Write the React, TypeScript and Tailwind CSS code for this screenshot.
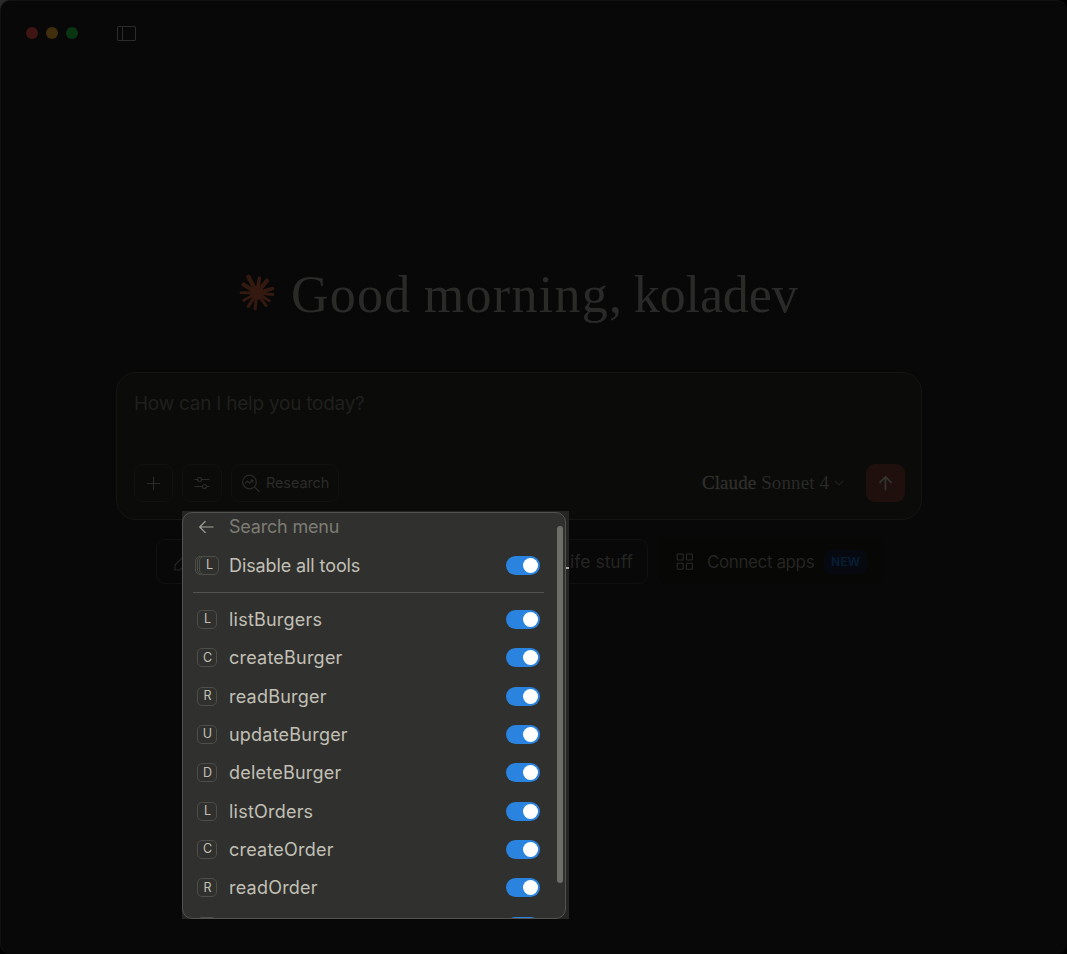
import React from "react";

const tools: [string, string][] = [
  ["L", "listBurgers"],
  ["C", "createBurger"],
  ["R", "readBurger"],
  ["U", "updateBurger"],
  ["D", "deleteBurger"],
  ["L", "listOrders"],
  ["C", "createOrder"],
  ["R", "readOrder"],
  ["", ""],
];

function Toggle() {
  return (
    <span className="flex h-[19px] w-[34px] shrink-0 items-center justify-end rounded-full bg-[#2a84df] pr-[2.5px]">
      <span className="h-[15px] w-[15px] rounded-full bg-white" />
    </span>
  );
}

function Key({ letter }: { letter: string }) {
  return (
    <span className="flex h-[19px] w-5 shrink-0 items-center justify-center rounded-[5px] border border-[#4d4d4a] bg-[#30302e] pl-px text-[12.5px] leading-none text-[#c2c0b6]">
      {letter}
    </span>
  );
}

function Burst() {
  const rays = [
    [-28, 20.5, 4.4], [9, 17, 3.6], [39, 18, 4.2], [74, 18, 3.4], [95, 17.5, 3],
    [122, 16, 3], [144, 17, 3], [187, 17.5, 3.2], [213, 17.5, 3.2],
    [241, 16.5, 3], [271, 17.5, 2.8], [302, 18, 4.2],
  ];
  return (
    <svg className="mb-[2px] h-[38px] w-[38px] shrink-0" viewBox="-19 -19 38 38" stroke="#33190f" strokeLinecap="round">
      {rays.map(([angle, length, width]) => (
        <line key={angle} x1="0" y1="0" x2="0" y2={-(length - width / 2)} strokeWidth={width} transform={`rotate(${angle})`} />
      ))}
      <circle r="7" fill="#33190f" stroke="none" />
    </svg>
  );
}

function ToolMenu() {
  return (
    <div className="absolute left-[182px] top-[511px] h-[408px] w-[387px] bg-[#252524] pt-px">
      <div className="relative h-[407px] w-[384px] overflow-hidden rounded-[10px] border border-[#52524f] bg-[#30302e] text-[#c2c0b6]">
        <div className="flex h-[33px] items-center pb-[5px] pl-[15px]">
          <svg className="h-4 w-[17px]" viewBox="0 0 17 16" fill="none" stroke="#a6a49b" strokeWidth="1.2">
            <path d="M15.5 8H2M7.5 2.2 1.7 8l5.8 5.8" />
          </svg>
          <span className="ml-[14px] text-[18px] leading-6 tracking-[-0.2px] text-[#7d7c75]">Search menu</span>
        </div>
        <div className="flex h-[38px] items-center pl-3 pr-[25px]">
          <span className="flex w-6 shrink-0">
            <span className="h-[19px] w-5 rounded-[5px] border border-[#4d4d4a]" />
            <span className="-ml-[18px] h-[19px] w-5 rounded-[5px] border border-[#4d4d4a] bg-[#30302e]" />
            <span className="-ml-[17px]"><Key letter="L" /></span>
          </span>
          <span className="ml-[10px] flex-1 whitespace-nowrap pt-px text-[18px] leading-6 tracking-[-0.1px]">Disable all tools</span>
          <Toggle />
        </div>
        <div className="ml-[10px] mt-2 h-px w-[351px] bg-[#52524f]" />
        <div className="mt-[7.3px]">
          {tools.map(([letter, name], i) => (
            <div key={i} className="flex h-[38.35px] items-center pl-[14px] pr-[25px]">
              <Key letter={letter} />
              <span className="ml-3 flex-1 pt-[0.8px] text-[18px] leading-6 tracking-[0.22px]">{name}</span>
              <Toggle />
            </div>
          ))}
        </div>
        <div className="absolute right-[2px] top-[13px] h-[357px] w-[6px] rounded-full bg-[#6e6e68]" />
      </div>
      <span className="absolute right-0 top-[56px] h-[2px] w-[3px] bg-[#a9a89f]" />
    </div>
  );
}

export default function App() {
  return (
    <div className="h-[954px] w-[1067px] overflow-hidden bg-linear-to-br from-[#2a2d2c] to-black to-50% font-['Inter','Noto_Sans',sans-serif]">
      <main className="relative flex h-full flex-col rounded-[10px] border-l border-t border-[#111212] bg-[#080808]">
        <header className="flex h-16 shrink-0 items-center pl-[25px]">
          <div className="flex gap-2">
            <span className="h-3 w-3 rounded-full bg-[#401614]" />
            <span className="h-3 w-3 rounded-full bg-[#402e0d]" />
            <span className="h-3 w-3 rounded-full bg-[#0a3513]" />
          </div>
          <svg className="ml-[38px] h-4 w-5" viewBox="0 0 20 16" fill="none" stroke="#2b2b2a" strokeWidth="1.1">
            <rect x="1.5" y="1.5" width="18" height="14" rx="1.2" />
            <path d="M6.5 1.5v14" />
          </svg>
        </header>

        <div className="mt-[195px] flex h-[68px] shrink-0 items-center pl-[237px]">
          <Burst />
          <h1 className="ml-[15px] whitespace-nowrap pt-px font-['Liberation_Serif',serif] text-[52px] leading-[68px] text-[#2a2a28]">
            <span className="tracking-[1.25px]">Good </span>
            <span className="-ml-[2px] tracking-[1.3px]">morning, </span>
            <span className="-ml-1 tracking-[-0.1px]">koladev</span>
          </h1>
        </div>

        <section className="ml-[115px] mt-[44px] flex h-[148px] w-[806px] shrink-0 flex-col justify-between rounded-[20px] border border-[#151511] bg-[#0b0b09] pb-[17px] pl-[17px] pr-4 pt-[19px]">
          <p className="text-[19px] leading-6 tracking-[-0.25px] text-[#20201e]">How can I help you today?</p>
          <div className="flex h-[38px] items-center text-[#2b2b29]">
            <span className="flex h-full w-[39px] items-center justify-center rounded-[9px] border border-[#11110f]">
              <svg className="h-[15px] w-[15px]" viewBox="0 0 15 15" stroke="currentColor" strokeWidth="1.1">
                <path d="M7.5 .8v13.4M.8 7.5h13.4" />
              </svg>
            </span>
            <span className="ml-[9px] flex h-full w-10 items-center justify-center rounded-[9px] border border-[#11110f]">
              <svg className="h-[14px] w-4" viewBox="0 0 16 14" fill="none" stroke="currentColor" strokeWidth="1.1">
                <path d="M.5 3.5h3M7.5 3.5h8M.5 10.5h8M12.5 10.5h3" />
                <circle cx="5.5" cy="3.5" r="2" />
                <circle cx="10.5" cy="10.5" r="2" />
              </svg>
            </span>
            <span className="ml-[9px] flex h-full w-[108px] items-center rounded-[9px] border border-[#11110f] pl-[9px]">
              <svg className="h-[19px] w-[19px]" viewBox="0 0 19 19" fill="none" stroke="currentColor" strokeWidth="1.2">
                <circle cx="8.5" cy="8" r="6.8" />
                <path d="m13.5 13 5 5M4.3 9.5l2.3-2.3 2 2 3-3M9.3 6h2.5v2.5" />
              </svg>
              <span className="ml-[6px] text-[14.5px] tracking-[-0.1px]">Research</span>
            </span>
            <span className="ml-auto whitespace-nowrap font-['Liberation_Serif',serif] text-[19px] tracking-[0.1px] text-[#2a2a28]">
              <span className="text-[#30302e] [-webkit-text-stroke:0.3px]">Claude</span> Sonnet 4
            </span>
            <svg className="ml-[5px] h-[6px] w-[10px]" viewBox="0 0 10 6" fill="none" stroke="#1f1f1d" strokeWidth="1.1">
              <path d="m.7.7 4.3 4.2L9.3.7" />
            </svg>
            <span className="ml-[22px] flex h-[38px] w-[39px] items-center justify-center rounded-[9px] bg-[#1f100d]">
              <svg className="h-4 w-4" viewBox="0 0 16 16" fill="none" stroke="#343330" strokeWidth="1.7">
                <path d="M7.5 15.2V1.8M1.5 7.8l6-6 6 6" />
              </svg>
            </span>
          </div>
        </section>

        <div className="ml-[155px] mt-[19px] flex h-[45px] shrink-0 text-[17.5px] text-[#252523]">
          <div className="flex w-[110px] items-center rounded-[9px] border border-[#111110] pl-4">
            <svg className="h-5 w-5" viewBox="0 0 20 20" fill="none" stroke="#252523" strokeWidth="1.2">
              <path d="M2 18v-5L13.5 1.5l5 5L7 18Z" />
            </svg>
          </div>
          <div className="ml-[252px] flex w-[130px] items-center justify-end whitespace-nowrap rounded-[9px] border border-[#111110] pr-[14px] pt-[2px]">
            Life stuff
          </div>
          <div className="ml-[10px] flex w-[225px] items-center whitespace-nowrap rounded-[9px] bg-[#070705] pl-[18px]">
            <svg className="h-[17px] w-[17px]" viewBox="0 0 17 17" fill="none" stroke="#2a2a28" strokeWidth="1.1">
              <rect x="1.2" y="1" width="6" height="6" rx=".7" />
              <rect x="10.4" y="1" width="6" height="6" rx=".7" />
              <rect x="1.2" y="10.2" width="6" height="6" rx=".7" />
              <rect x="10.4" y="10.2" width="6" height="6" rx=".7" />
            </svg>
            <span className="ml-[14px] pt-[3px] text-[17px] tracking-[-0.4px]">Connect apps</span>
            <span className="ml-[10px] flex h-6 w-[43px] items-center justify-center rounded-[7px] bg-[#060a10] text-[12px] font-semibold tracking-[0.2px] text-[#081e36]">NEW</span>
          </div>
        </div>
      </main>
      <ToolMenu />
    </div>
  );
}
